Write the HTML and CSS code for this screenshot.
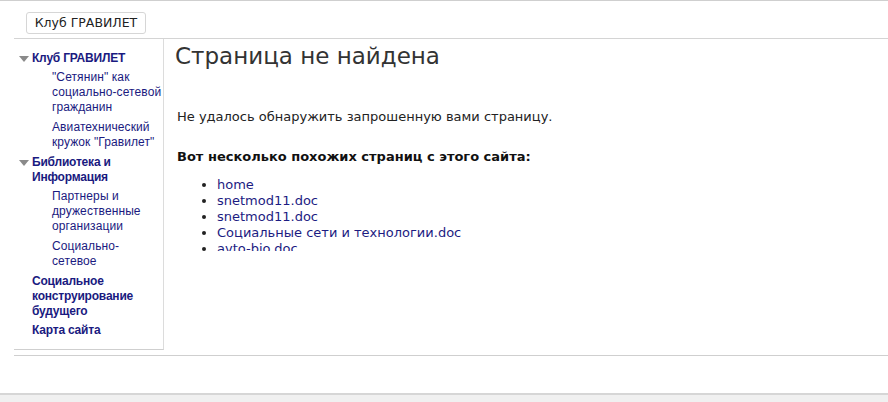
FILE: index.html
```html
<!DOCTYPE html>
<html lang="ru">
<head>
<meta charset="utf-8">
<title>Страница не найдена</title>
<link rel="stylesheet" href="styles.css">
</head>
<body>
<div class="page">
  <div class="topbar">
    <span class="site-btn">Клуб ГРАВИЛЕТ</span>
  </div>
  <div class="frame">
    <div class="columns">
      <nav class="sidebar">
        <ul class="nav">
          <li class="nav-item">
            <div class="nav-head"><span class="tri"></span><a class="nav-top" href="#">Клуб ГРАВИЛЕТ</a></div>
            <ul class="sub">
              <li><a href="#">"Сетянин" как социально-сетевой гражданин</a></li>
              <li><a href="#">Авиатехнический кружок "Гравилет"</a></li>
            </ul>
          </li>
          <li class="nav-item">
            <div class="nav-head"><span class="tri"></span><a class="nav-top" href="#">Библиотека и Информация</a></div>
            <ul class="sub">
              <li><a href="#">Партнеры и дружественные организации</a></li>
              <li><a href="#">Социально-сетевое</a></li>
            </ul>
          </li>
          <li class="nav-item">
            <div class="nav-head"><a class="nav-top" href="#">Социальное конструирование будущего</a></div>
          </li>
          <li class="nav-item">
            <div class="nav-head"><a class="nav-top" href="#">Карта сайта</a></div>
          </li>
        </ul>
      </nav>
      <main class="content">
        <h1 class="title">Страница не найдена</h1>
        <div class="body">
          <p class="msg">Не удалось обнаружить запрошенную вами страницу.</p>
          <h3 class="similar">Вот несколько похожих страниц с этого сайта:</h3>
          <ul class="links">
            <li><a href="#">home</a></li>
            <li><a href="#">snetmod11.doc</a></li>
            <li><a href="#">snetmod11.doc</a></li>
            <li><a href="#">Социальные сети и технологии.doc</a></li>
            <li><a href="#">avto-bio.doc</a></li>
          </ul>
        </div>
      </main>
    </div>
  </div>
  <div class="footer"></div>
</div>
</body>
</html>
```

FILE: styles.css
```css
html, body {
  margin: 0;
  padding: 0;
  background: #ffffff;
}
body {
  font-family: "DejaVu Sans", Verdana, sans-serif;
  color: #222;
  width: 888px;
  height: 402px;
  overflow: hidden;
}
.page {
  border-top: 1px solid #cfcfcf;
  height: 401px;
  display: flex;
  flex-direction: column;
}
.topbar {
  height: 37px;
  box-sizing: border-box;
  padding: 11px 0 0 26px;
}
.site-btn {
  display: inline-block;
  box-sizing: border-box;
  height: 22px;
  width: 120px;
  border: 1px solid #d6d6d6;
  border-radius: 3px;
  font-family: "DejaVu Sans", Verdana, sans-serif;
  font-size: 12.5px;
  line-height: 20px;
  color: #222;
  text-align: center;
}
.frame {
  margin-left: 14px;
  border-top: 1px solid #d4d4d4;
  border-bottom: 1px solid #cfcfcf;
  height: 316px;
}
.columns {
  display: flex;
  height: 100%;
}
.sidebar {
  width: 150px;
  border-right: 1px solid #dcdcdc;
  height: 311px;
  border-bottom: 1px solid #cfcfcf;
  box-sizing: border-box;
  padding-top: 12px;
}
.nav, .sub {
  list-style: none;
  margin: 0;
  padding: 0;
}
.nav-item {
  margin-bottom: 4px;
}
.nav-head {
  display: flex;
  align-items: flex-start;
  padding-left: 18px;
  position: relative;
}
.tri {
  position: absolute;
  left: 5px;
  top: 5px;
  width: 0;
  height: 0;
  border-left: 5px solid transparent;
  border-right: 5px solid transparent;
  border-top: 6px solid #8a8a8a;
}
.nav-top {
  font-family: "Liberation Sans", Arial, sans-serif;
  font-weight: bold;
  font-size: 12px;
  line-height: 15px;
  color: #1a1a80;
  text-decoration: none;
  letter-spacing: -0.2px;
}
.sub {
  padding-left: 38px;
  padding-top: 4px;
  padding-bottom: 1px;
}
.sub li {
  font-size: 12px;
  line-height: 15px;
}
.sub li + li {
  margin-top: 5px;
}
.sub a {
  font-family: "Liberation Sans", Arial, sans-serif;
  font-size: 12px;
  line-height: 15px;
  letter-spacing: 0.1px;
  color: #1a1a80;
  text-decoration: none;
  display: block;
  max-width: 110px;
}
.content {
  flex: 1;
  padding-left: 11px;
}
.title {
  margin: 2px 0 0 0;
  font-family: "DejaVu Sans", Verdana, sans-serif;
  font-weight: normal;
  font-size: 23px;
  line-height: 30px;
  color: #333;
}
.body {
  height: 180px;
  overflow: hidden;
  padding-left: 2px;
}
.msg {
  margin: 38px 0 0 0;
  font-size: 13px;
  line-height: 16px;
  color: #222;
}
.similar {
  margin: 24px 0 0 0;
  font-size: 13px;
  font-weight: bold;
  line-height: 16px;
  color: #111;
}
.links {
  margin: 12px 0 0 0;
  padding-left: 40px;
  font-size: 13px;
  line-height: 16px;
}
.links a {
  color: #1c1c82;
  text-decoration: none;
}
.footer {
  margin-top: 37px;
  border-top: 2px solid #d6d6d6;
  background: #f0f0f0;
  flex: 1;
}
```
